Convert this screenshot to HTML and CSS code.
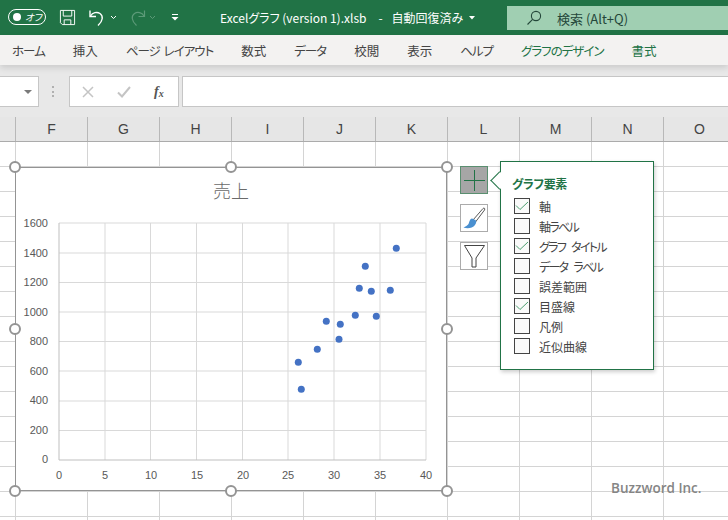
FILE: index.html
```html
<!DOCTYPE html>
<html lang="ja">
<head>
    <meta charset="UTF-8">
    <title>Excelグラフ (version 1).xlsb</title>
    <link rel="stylesheet" href="styles.css">
</head>
<body>
    <div class="window">
        <!-- Title bar -->
        <div class="titlebar">
            <div class="toggle"><span class="toggle-dot"></span><span class="toggle-text">オフ</span></div>
            <svg class="qat-save" width="17" height="17" viewBox="0 0 18 18" fill="none" stroke="#fff" stroke-width="1">
                <path d="M1.5 1.5H16.5V16.5H3.5L1.5 14.5Z"/>
                <path d="M4.5 1.5V7.5H13.5V1.5"/>
                <path d="M5.5 16.5V11.5H12.5V16.5"/>
            </svg>
            <svg class="qat-undo" width="18" height="18" viewBox="0 0 18 18" fill="none" stroke="#fff" stroke-width="1.4">
                <path d="M2 1.5V7.5H8"/>
                <path d="M2.5 7C4.5 3.5 9 2.5 12 4.5C15.5 7 15 12 10 16.5"/>
            </svg>
            <svg class="qat-chevron" width="7" height="5" viewBox="0 0 7 5" fill="none" stroke="#fff" stroke-width="1"><path d="M1 1L3.5 3.5L6 1"/></svg>
            <svg class="qat-redo" width="16" height="18" viewBox="0 0 16 18" fill="none" stroke="#5c9a78" stroke-width="1.2">
                <path d="M14.5 1.5V7.5H8.5"/>
                <path d="M14 7C12 3.5 7.5 2.5 4.5 4.5C1 7 1.5 12 6.5 16.5"/>
            </svg>
            <svg class="qat-chevron dim" width="7" height="5" viewBox="0 0 7 5" fill="none" stroke="#5c9a78" stroke-width="1"><path d="M1 1L3.5 3.5L6 1"/></svg>
            <svg class="qat-more" width="8" height="7" viewBox="0 0 8 7"><path d="M1 .5H7" stroke="#fff" fill="none"/><path d="M0.5 3H7.5L4 6.5Z" fill="#fff"/></svg>
            <div class="doc-title">Excelグラフ (version 1).xlsb<span class="doc-dash">-</span>自動回復済み</div>
            <svg class="doc-arrow" width="6" height="4" viewBox="0 0 6 4"><path d="M0 0H6L3 3.5Z" fill="#fff"/></svg>
            <div class="search">
                <svg width="16" height="16" viewBox="0 0 16 16" fill="none" stroke="#24473a" stroke-width="1.1">
                    <circle cx="10" cy="6" r="4.6"/>
                    <path d="M6.6 9.4L1.5 14.5"/>
                </svg>
                <span>検索 (Alt+Q)</span>
            </div>
        </div>

        <!-- Ribbon tabs -->
        <div class="tabs">
            <span class="tab kana">ホーム</span>
            <span class="tab">挿入</span>
            <span class="tab kana">ページ レイアウト</span>
            <span class="tab">数式</span>
            <span class="tab kana">データ</span>
            <span class="tab">校閲</span>
            <span class="tab">表示</span>
            <span class="tab kana">ヘルプ</span>
            <span class="tab kana tab-green">グラフのデザイン</span>
            <span class="tab tab-green">書式</span>
        </div>

        <!-- Formula bar -->
        <div class="formula-bar">
            <div class="name-box"><svg width="8" height="4" viewBox="0 0 8 4"><path d="M0 0H8L4 4Z" fill="#7a7a7a"/></svg></div>
            <div class="grip"></div>
            <div class="func-box">
                <svg width="12" height="12" viewBox="0 0 12 12" fill="none" stroke="#c4c4c4" stroke-width="1.5"><path d="M1 1L11 11M11 1L1 11"/></svg>
                <svg width="14" height="12" viewBox="0 0 14 12" fill="none" stroke="#c4c4c4" stroke-width="2"><path d="M1 6.5L5 10.5L13 1"/></svg>
                <span class="fx">f<sub>x</sub></span>
            </div>
            <div class="formula-input"></div>
        </div>

        <!-- Column headers -->
        <div class="col-head">
            <span class="corner"></span>
            <span>F</span><span>G</span><span>H</span><span>I</span><span>J</span><span>K</span><span>L</span><span>M</span><span>N</span><span>O</span>
        </div>

        <!-- Sheet -->
        <div class="sheet">
            <div class="chart">
                <svg class="chart-svg" width="432" height="324" viewBox="15 167 432 324">
                    <g class="grid-lines">
                        <path d="M59 223H426M59 253H426M59 282.500H426M59 312H426M59 341.500H426M59 371H426M59 401H426M59 430.500H426"/>
                        <path d="M105 223V460M150.500 223V460M196.500 223V460M242.500 223V460M288 223V460M334 223V460M380 223V460M426 223V460"/>
                    </g>
                    <path class="axis-lines" d="M59 223V460H426"/>
                    <text class="chart-title" x="231" y="198">売上</text>
                    <g class="y-labels">
                        <text x="48" y="227">1600</text>
                        <text x="48" y="257">1400</text>
                        <text x="48" y="286">1200</text>
                        <text x="48" y="316">1000</text>
                        <text x="48" y="345">800</text>
                        <text x="48" y="375">600</text>
                        <text x="48" y="404">400</text>
                        <text x="48" y="434">200</text>
                        <text x="48" y="463">0</text>
                    </g>
                    <g class="x-labels">
                        <text x="59" y="479">0</text>
                        <text x="105" y="479">5</text>
                        <text x="151" y="479">10</text>
                        <text x="197" y="479">15</text>
                        <text x="243" y="479">20</text>
                        <text x="288" y="479">25</text>
                        <text x="334" y="479">30</text>
                        <text x="380" y="479">35</text>
                        <text x="426" y="479">40</text>
                    </g>
                    <g class="dots">
                        <circle cx="396.300" cy="248.300" r="3.500"/>
                        <circle cx="365.300" cy="266.300" r="3.500"/>
                        <circle cx="359.300" cy="288.300" r="3.500"/>
                        <circle cx="371.300" cy="291.300" r="3.500"/>
                        <circle cx="390.300" cy="290.300" r="3.500"/>
                        <circle cx="355.300" cy="315.300" r="3.500"/>
                        <circle cx="376.300" cy="316.300" r="3.500"/>
                        <circle cx="326.300" cy="321.300" r="3.500"/>
                        <circle cx="340.300" cy="324.300" r="3.500"/>
                        <circle cx="339" cy="339.300" r="3.500"/>
                        <circle cx="317.300" cy="349.300" r="3.500"/>
                        <circle cx="298.300" cy="362.300" r="3.500"/>
                        <circle cx="301.300" cy="389.300" r="3.500"/>
                    </g>
                </svg>
                <span class="handle h-tl"></span>
                <span class="handle h-tc"></span>
                <span class="handle h-tr"></span>
                <span class="handle h-ml"></span>
                <span class="handle h-mr"></span>
                <span class="handle h-bl"></span>
                <span class="handle h-bc"></span>
                <span class="handle h-br"></span>
            </div>

            <div class="chart-tools">
                <div class="tool tool-active">
                    <svg width="26" height="26" viewBox="0 0 26 26" stroke="#217346" stroke-width="1" fill="none"><path d="M13.500 3V24M3 13.500H24"/></svg>
                </div>
                <div class="tool">
                    <svg width="26" height="26" viewBox="0 0 26 26">
                        <path d="M12 15L22 3.500C23 2.500 24.500 3.500 23.500 5L14.500 17Z" fill="#fff" stroke="#595959"/>
                        <path d="M11 13.500C8.500 14 8.500 17 7.500 19C6.500 20.500 4.500 21.500 2.500 22.500C6 24 11.500 23.500 14 20C15.500 18 15.500 16 14.500 15Z" fill="#4a90d0"/>
                    </svg>
                </div>
                <div class="tool">
                    <svg width="24" height="24" viewBox="0 0 24 24" fill="#fff" stroke="#444" stroke-width="1"><path d="M2.500 1.500H22.500L14 14V23H10V14Z"/></svg>
                </div>
            </div>

            <div class="elements-panel">
                <span class="panel-arrow"></span>
                <div class="panel-title">グラフ要素</div>
                <label class="element"><span class="check"><svg width="14" height="10" viewBox="0 0 14 10" fill="none" stroke="#4ea072" stroke-width="1"><path d="M1 4.500L5 8.500L13 1"/></svg></span>軸</label>
                <label class="element kana"><span class="check"></span>軸ラベル</label>
                <label class="element kana"><span class="check"><svg width="14" height="10" viewBox="0 0 14 10" fill="none" stroke="#4ea072" stroke-width="1"><path d="M1 4.500L5 8.500L13 1"/></svg></span>グラフ タイトル</label>
                <label class="element kana"><span class="check"></span>データ ラベル</label>
                <label class="element"><span class="check"></span>誤差範囲</label>
                <label class="element"><span class="check"><svg width="14" height="10" viewBox="0 0 14 10" fill="none" stroke="#4ea072" stroke-width="1"><path d="M1 4.500L5 8.500L13 1"/></svg></span>目盛線</label>
                <label class="element"><span class="check"></span>凡例</label>
                <label class="element"><span class="check"></span>近似曲線</label>
            </div>

            <div class="watermark">Buzzword Inc.</div>
        </div>
    </div>
</body>
</html>
```
FILE: styles.css
```css
* {
    box-sizing: border-box;
}
body {
    margin: 0;
    width: 728px;
    height: 520px;
    overflow: hidden;
    font-family: "Noto Sans CJK JP", "Noto Sans", sans-serif;
    font-feature-settings: "palt";
    background-color: #ffffff;
}
.window {
    width: 728px;
    height: 520px;
    display: flex;
    flex-direction: column;
    overflow: hidden;
}

/* title bar */
.titlebar {
    height: 35px;
    flex: none;
    display: flex;
    align-items: center;
    background-color: #217346;
    color: #ffffff;
    padding-left: 8px;
}
.toggle {
    width: 38px;
    height: 16px;
    border: 1px solid #ffffff;
    border-radius: 8px;
    display: flex;
    align-items: center;
    padding-left: 4px;
    margin-bottom: 1px;
}
.toggle-dot {
    width: 8px;
    height: 8px;
    border-radius: 50%;
    background-color: #ffffff;
}
.toggle-text {
    font-size: 9.5px;
    font-style: italic;
    margin-left: 4px;
    white-space: nowrap;
}
.qat-save {
    margin-left: 13px;
}
.qat-undo {
    margin-left: 12px;
}
.qat-chevron {
    margin-left: 4px;
}
.qat-chevron.dim {
    margin-left: 3px;
}
.qat-redo {
    margin-left: 13px;
}
.qat-more {
    margin-left: 15px;
}
.doc-title {
    margin-left: 41px;
    font-size: 12px;
    white-space: nowrap;
}
.doc-dash {
    margin: 0 9px 0 12px;
}
.doc-arrow {
    margin-left: 6px;
}
.search {
    position: absolute;
    left: 507px;
    top: 6px;
    width: 221px;
    height: 24px;
    background-color: #a0cfb2;
    color: #24473a;
    font-size: 13px;
    display: flex;
    align-items: center;
    padding-left: 19px;
    gap: 15px;
}

/* ribbon tabs */
.tabs {
    height: 30px;
    flex: none;
    display: flex;
    align-items: center;
    gap: 28px;
    padding-left: 12px;
    background-color: #f3f2f1;
    box-shadow: 0 3px 6px rgba(0, 0, 0, 0.12);
    position: relative;
    font-size: 12.5px;
    color: #444444;
}
.tab {
    white-space: nowrap;
}
.tab.kana {
    letter-spacing: -1px;
    word-spacing: 2px;
}
.tab-green {
    color: #217346;
}

/* formula bar */
.formula-bar {
    height: 52px;
    flex: none;
    display: flex;
    align-items: flex-start;
    padding-top: 11px;
    background-color: #e8e8e8;
}
.name-box {
    width: 39px;
    height: 31px;
    background-color: #ffffff;
    border: 1px solid #c6c6c6;
    border-left: none;
    display: flex;
    align-items: center;
    justify-content: flex-end;
    padding-right: 6px;
}
.grip {
    width: 2px;
    height: 11px;
    margin: 10px 15px 0 13px;
    border-left: 2px dotted #b0b0b0;
}
.func-box {
    width: 110px;
    height: 31px;
    margin-right: 3px;
    background-color: #ffffff;
    border: 1px solid #c6c6c6;
    display: flex;
    align-items: center;
    padding-left: 12px;
    gap: 23px;
}
.fx {
    font-family: "Liberation Serif", serif;
    font-style: italic;
    font-size: 14px;
    color: #555555;
    font-weight: bold;
}
.fx sub {
    font-size: 10px;
    vertical-align: -1px;
}
.formula-input {
    flex: 1;
    height: 31px;
    background-color: #ffffff;
    border: 1px solid #c6c6c6;
    border-right: none;
}

/* column headers */
.col-head {
    height: 25px;
    flex: none;
    display: flex;
    background-color: #e6e6e6;
    border-bottom: 1px solid #ababab;
    font-family: "Liberation Sans", sans-serif;
    font-size: 14px;
    color: #444444;
}
.col-head span {
    width: 72px;
    flex: none;
    display: flex;
    align-items: center;
    justify-content: center;
    border-left: 1px solid #b8b8b8;
}
.col-head .corner {
    width: 15px;
    border-left: none;
}

/* sheet */
.sheet {
    flex: 1;
    position: relative;
    background-color: #ffffff;
    background-image:
        linear-gradient(to right, #d4d4d4 1px, transparent 1px),
        linear-gradient(to bottom, transparent 24px, #d4d4d4 24px);
    background-size: 72px 25px;
    background-position: 15px 0, 0 0;
}

/* chart object */
.chart {
    position: absolute;
    left: 15px;
    top: 25px;
    width: 432px;
    height: 324px;
    background-color: #ffffff;
    border: 1px solid #949494;
}
.chart-svg {
    position: absolute;
    left: -1px;
    top: -1px;
}
.grid-lines path {
    fill: none;
    stroke: #d9d9d9;
    stroke-width: 1;
}
.axis-lines {
    fill: none;
    stroke: #bfbfbf;
    stroke-width: 1;
}
.chart-title {
    font-size: 18px;
    font-weight: 300;
    fill: #6a6a6a;
    text-anchor: middle;
}
.y-labels text,
.x-labels text {
    font-family: "Liberation Sans", sans-serif;
    font-size: 11px;
    fill: #595959;
}
.y-labels text {
    text-anchor: end;
}
.x-labels text {
    text-anchor: middle;
}
.dots circle {
    fill: #4472c4;
}
.handle {
    position: absolute;
    width: 12px;
    height: 12px;
    margin: -6px 0 0 -6px;
    border: 2px solid #949494;
    border-radius: 50%;
    background-color: #ffffff;
}
.h-tl, .h-ml, .h-bl { left: -1px; }
.h-tc, .h-bc { left: 215px; }
.h-tr, .h-mr, .h-br { left: 431px; }
.h-tl, .h-tc, .h-tr { top: -1px; }
.h-ml, .h-mr { top: 161px; }
.h-bl, .h-bc, .h-br { top: 323px; }

/* chart tool buttons */
.chart-tools {
    position: absolute;
    left: 460px;
    top: 24px;
    display: flex;
    flex-direction: column;
    gap: 10px;
}
.tool {
    width: 28px;
    height: 28px;
    background-color: #ffffff;
    border: 1px solid #ababab;
    display: flex;
    align-items: center;
    justify-content: center;
}
.tool-active {
    background-color: #a6a6a6;
    border-color: #5a8f70;
}

/* chart elements flyout */
.elements-panel {
    position: absolute;
    left: 500px;
    top: 19px;
    width: 154px;
    height: 209px;
    padding: 14px 0 0 13px;
    background-color: #ffffff;
    border: 1px solid #217346;
    box-shadow: 1px 2px 4px rgba(0, 0, 0, 0.2);
}
.panel-arrow {
    position: absolute;
    left: -8px;
    top: 12px;
    width: 13px;
    height: 13px;
    background-color: #ffffff;
    border-left: 1px solid #217346;
    border-bottom: 1px solid #217346;
    transform: rotate(45deg);
}
.panel-title {
    margin: 0 0 5px -2px;
    font-size: 12px;
    font-weight: bold;
    letter-spacing: -0.4px;
    line-height: 15px;
    color: #217346;
}
.element {
    display: flex;
    align-items: center;
    height: 20px;
    font-size: 12px;
    color: #444444;
    white-space: nowrap;
}
.element.kana {
    letter-spacing: -1.7px;
    word-spacing: 5px;
}
.check {
    width: 16px;
    height: 16px;
    flex: none;
    margin-right: 9px;
    background-color: #fafafa;
    border: 1px solid #444444;
    display: flex;
    align-items: center;
    justify-content: center;
}

.watermark {
    position: absolute;
    left: 611px;
    top: 337px;
    font-family: "Open Sans", sans-serif;
    font-weight: 600;
    font-size: 13.5px;
    color: #858585;
}
```
